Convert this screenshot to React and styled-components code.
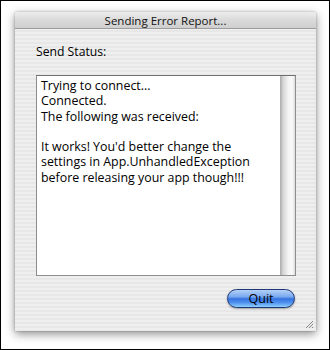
import React from "react";
import styled, { createGlobalStyle } from "styled-components";

const GlobalStyle = createGlobalStyle`
  html, body {
    margin: 0;
    padding: 0;
    background: #ffffff;
  }
`;

const uiFont = `"Lucida Grande", "Open Sans", "DejaVu Sans", sans-serif`;

const Frame = styled.div`
  width: 330px;
  height: 350px;
  box-sizing: border-box;
  border: 1px solid #000000;
  background: #ffffff;
  padding: 11px 13px 0 14px;
  font-family: ${uiFont};
`;

const Window = styled.div`
  width: 301px;
  height: 319px;
  display: flex;
  flex-direction: column;
  background: repeating-linear-gradient(
    to bottom,
    #efefef 0px,
    #efefef 2px,
    #e7e7e7 2px,
    #e7e7e7 4px
  );
  box-shadow: 0 3px 9px rgba(0, 0, 0, 0.45), 0 0 2px rgba(0, 0, 0, 0.25);
  position: relative;
`;

const TitleBar = styled.div`
  height: 16px;
  flex: none;
  border-bottom: 1px solid #9c9c9c;
  background: linear-gradient(to bottom, #ededed 0%, #dadada 50%, #cfcfcf 100%);
  display: flex;
  align-items: center;
  justify-content: center;
  font-size: 11.5px;
  color: #111111;
`;

const Content = styled.div`
  flex: 1;
  display: flex;
  flex-direction: column;
  padding: 15px 20px 24px 21px;
`;

const Label = styled.div`
  font-size: 12.2px;
  line-height: 16px;
  color: #000000;
  margin-bottom: 15px;
`;

const TextBox = styled.div`
  height: 201px;
  box-sizing: border-box;
  display: flex;
  border: 1px solid #8d8d8d;
  border-top-color: #6f6f6f;
  background: #ffffff;
`;

const Log = styled.div`
  flex: 1;
  padding: 2px 4px;
  font-size: 12.4px;
  line-height: 15.3px;
  color: #000000;
  white-space: pre-wrap;
`;

const ScrollTrack = styled.div`
  width: 15px;
  flex: none;
  background: linear-gradient(
    to right,
    #a9a9a9 0%,
    #d4d4d4 20%,
    #f4f4f4 55%,
    #fafafa 80%,
    #dedede 100%
  );
`;

const ButtonRow = styled.div`
  display: flex;
  justify-content: flex-end;
  margin-top: 13px;
  padding-right: 1px;
`;

const AquaButton = styled.button`
  width: 68px;
  height: 19px;
  border-radius: 10px;
  border: 1px solid #1f3877;
  padding: 0;
  font-family: ${uiFont};
  font-size: 12.5px;
  line-height: 17px;
  color: #000000;
  background: linear-gradient(
    to bottom,
    #b4d0f7 0%,
    #79a9ef 40%,
    #3573e0 52%,
    #4f92ef 75%,
    #8fd0fb 100%
  );
  box-shadow: 0 1px 2px rgba(0, 0, 0, 0.35);
`;

const Grip = styled.svg`
  position: absolute;
  right: 2px;
  bottom: 2px;
`;

const lines = `Trying to connect...
Connected.
The following was received:

It works! You'd better change the
settings in App.UnhandledException
before releasing your app though!!!`;

export default function App() {
  return (
    <>
      <GlobalStyle />
      <Frame>
        <Window>
          <TitleBar>Sending Error Report...</TitleBar>
          <Content>
            <Label>Send Status:</Label>
            <TextBox>
              <Log>{lines}</Log>
              <ScrollTrack />
            </TextBox>
            <ButtonRow>
              <AquaButton>Quit</AquaButton>
            </ButtonRow>
          </Content>
          <Grip width="10" height="10" viewBox="0 0 10 10">
            <path d="M9 2 L2 9 M9 5 L5 9 M9 8 L8 9" stroke="#8a8a8a" strokeWidth="1" />
          </Grip>
        </Window>
      </Frame>
    </>
  );
}
